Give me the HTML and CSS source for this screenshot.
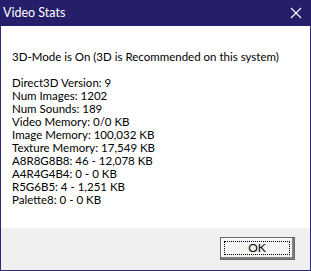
FILE: index.html
```html
<!DOCTYPE html>
<html>
<head>
<meta charset="utf-8">
<link rel="stylesheet" href="styles.css">
</head>
<body>
<div class="window">
  <div class="titlebar">
    <span class="title">Video Stats</span>
    <svg class="close" width="12" height="12" viewBox="0 0 12 12"><path d="M1 1 L11 11 M11 1 L1 11" stroke="#ffffff" stroke-width="1.1" fill="none"/></svg>
  </div>
  <div class="content">
    <div class="line">3D-Mode is On (3D is Recommended on this system)</div>
    <div class="line blank"></div>
    <div class="line">Direct3D Version: 9</div>
    <div class="line">Num Images: 1202</div>
    <div class="line">Num Sounds: 189</div>
    <div class="line">Video Memory: 0/0 KB</div>
    <div class="line">Image Memory: 100,032 KB</div>
    <div class="line">Texture Memory: 17,549 KB</div>
    <div class="line">A8R8G8B8: 46 - 12,078 KB</div>
    <div class="line">A4R4G4B4: 0 - 0 KB</div>
    <div class="line">R5G6B5: 4 - 1,251 KB</div>
    <div class="line">Palette8: 0 - 0 KB</div>
  </div>
  <div class="footer">
    <button class="ok"><span class="focus">OK</span></button>
  </div>
</div>
</body>
</html>
```
FILE: styles.css
```css
html, body {
  margin: 0;
  padding: 0;
  width: 311px;
  height: 271px;
  overflow: hidden;
  background: #ffffff;
}
.window {
  width: 311px;
  height: 271px;
  box-sizing: border-box;
  border: 1px solid #2e2a78;
  border-top: none;
  display: flex;
  flex-direction: column;
  font-family: Lato, "Noto Sans", sans-serif;
  font-size: 11.5px;
  color: #000000;
}
.titlebar {
  height: 26px;
  flex: none;
  background: #241e6b;
  display: flex;
  align-items: center;
  justify-content: space-between;
  padding: 0 9px 0 3px;
  margin: 0 -1px;
  color: #ffffff;
}
.title {
  font-size: 12.5px;
  line-height: 14px;
}
.close {
  display: block;
}
.content {
  flex: 1;
  background: #ffffff;
  padding: 24px 0 0 11px;
}
.line {
  height: 13px;
  line-height: 13px;
  white-space: nowrap;
}
.footer {
  height: 42px;
  flex: none;
  background: #f0f0f0;
  display: flex;
  justify-content: flex-end;
  align-items: flex-start;
  padding: 9px 15px 0 0;
  box-sizing: border-box;
}
.ok {
  width: 75px;
  height: 23px;
  box-sizing: border-box;
  margin: 0;
  padding: 2px;
  border: 1px solid #646464;
  background: #f4f4f4;
  box-shadow: inset -2px -2px 0 #7f7f7f, inset 1px 1px 0 #ffffff;
  font-family: Lato, "Noto Sans", sans-serif;
  font-size: 12px;
  color: #000000;
  display: flex;
}
.focus {
  flex: 1;
  border: 1px dotted #000000;
  margin: 1px 2px 2px 1px;
  display: flex;
  align-items: center;
  justify-content: center;
  line-height: 12px;
}
```
